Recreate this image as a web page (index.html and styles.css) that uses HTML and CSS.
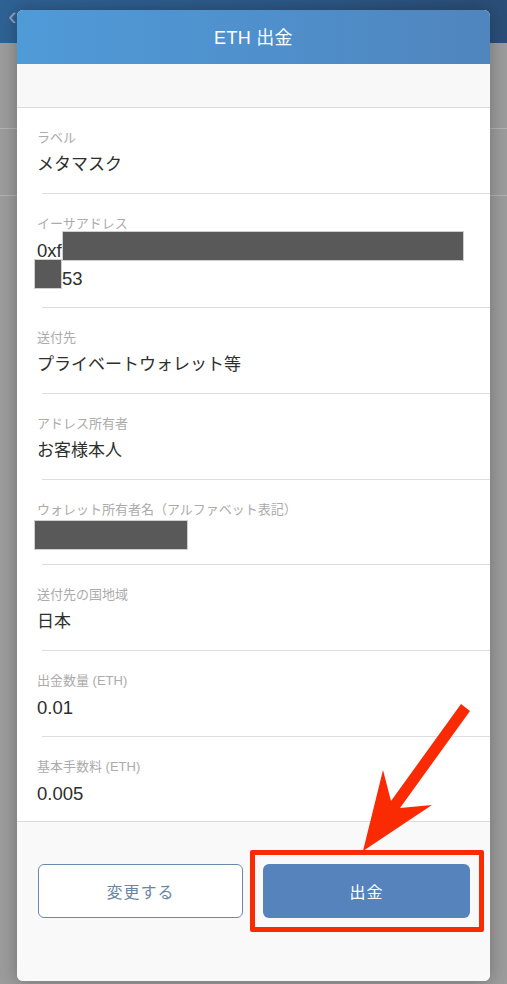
FILE: index.html
```html
<!DOCTYPE html>
<html lang="ja">
<head>
<meta charset="utf-8">
<title>ETH 出金</title>
<link rel="stylesheet" href="styles.css">
</head>
<body>
<div class="backdrop">
  <div class="topbar"><span class="back">‹</span></div>
  <div class="bgline l1"></div>
  <div class="bgline l2"></div>
</div>

<div class="modal">
  <div class="modal-header">ETH 出金</div>
  <div class="band"></div>
  <div class="rows">
    <div class="row">
      <div class="label">ラベル</div>
      <div class="value">メタマスク</div>
    </div>
    <div class="row">
      <div class="label">イーサアドレス</div>
      <div class="value num">0xf<span class="redact r1"></span><br><span class="redact r2"></span>53</div>
    </div>
    <div class="row">
      <div class="label">送付先</div>
      <div class="value">プライベートウォレット等</div>
    </div>
    <div class="row">
      <div class="label">アドレス所有者</div>
      <div class="value">お客様本人</div>
    </div>
    <div class="row">
      <div class="label">ウォレット所有者名（アルファベット表記）</div>
      <div class="value"><div class="redact r3"></div></div>
    </div>
    <div class="row">
      <div class="label">送付先の国地域</div>
      <div class="value">日本</div>
    </div>
    <div class="row">
      <div class="label">出金数量 (ETH)</div>
      <div class="value num">0.01</div>
    </div>
    <div class="row last">
      <div class="label">基本手数料 (ETH)</div>
      <div class="value num">0.005</div>
    </div>
  </div>
  <div class="footer">
    <button class="btn btn-outline">変更する</button>
    <button class="btn btn-primary">出金</button>
  </div>
</div>

<div class="highlight"></div>
<svg class="arrow" width="507" height="984" viewBox="0 0 507 984">
  <polygon points="461,704 391,801 383,770 363,851 432,805 400,808 470,711" fill="#fa2a02"/>
</svg>
</body>
</html>
```
FILE: styles.css
```css
* { box-sizing: border-box; }

html, body {
  margin: 0;
  padding: 0;
}

body {
  width: 507px;
  height: 984px;
  overflow: hidden;
  position: relative;
  background: #9c9c9c;
  font-family: "Liberation Sans", "Noto Sans CJK JP", sans-serif;
}

.backdrop {
  height: 984px;
}

.topbar {
  height: 43px;
  background: linear-gradient(90deg, #2f6294 0%, #2c5886 60%, #2b4e78 100%);
  padding: 6px 0 0 8px;
}

.back {
  color: rgba(255, 255, 255, 0.45);
  font-size: 26px;
  line-height: 20px;
}

.bgline {
  height: 1px;
  background: #b3b3b3;
}

.l1 { margin-top: 85px; }
.l2 { margin-top: 66px; }

.modal {
  position: absolute;
  left: 17px;
  top: 10px;
  width: 473px;
  height: 971px;
  border-radius: 6px;
  overflow: hidden;
  background: #fff;
  display: flex;
  flex-direction: column;
  box-shadow: 0 0 18px rgba(0, 0, 0, 0.28);
}

.modal-header {
  height: 54px;
  flex: none;
  background: linear-gradient(90deg, #4f9bd8 0%, #4f8fcb 55%, #5085bd 100%);
  color: #fff;
  font-size: 18px;
  line-height: 56px;
  text-align: center;
  letter-spacing: 0.3px;
}

.band {
  height: 44px;
  flex: none;
  background: #f8f8f8;
  border-bottom: 1px solid #dcdcdc;
}

.rows {
  flex: none;
}

.row {
  padding: 21px 0 0 20px;
}

.row::after {
  content: "";
  display: block;
  height: 1px;
  margin: 14px 0 0 5px;
  background: #dedede;
}

.row.last::after {
  display: none;
}

.row.last {
  padding-bottom: 13px;
}

.label {
  font-size: 13px;
  line-height: 18px;
  color: #ababab;
  margin-bottom: 4px;
}

.value {
  font-size: 17px;
  line-height: 28px;
  color: #2e2e2e;
}

.value.num {
  font-size: 18.5px;
}

.redact {
  background: #595959;
  border: 1px solid #cfcfcf;
}

.r1 {
  display: inline-block;
  width: 402px;
  height: 30px;
  vertical-align: top;
  margin: -6px 0 0 0;
}

.r2 {
  display: inline-block;
  width: 28px;
  height: 30px;
  vertical-align: top;
  margin: -6px 0 0 -3px;
}

.r3 {
  width: 154px;
  height: 30px;
  margin: -3px 0 1px -3px;
}

.footer {
  flex: 1;
  background: #f9f9f9;
  border-top: 1px solid #dcdcdc;
  display: flex;
  align-items: flex-start;
  gap: 20px;
  padding: 42px 20px 0 21px;
}

.btn {
  height: 54px;
  border-radius: 6px;
  font-family: "Noto Sans CJK JP", sans-serif;
  font-size: 16px;
  letter-spacing: 1px;
  padding: 0;
}

.btn-outline {
  width: 205px;
  background: #fff;
  border: 1px solid #6a8aac;
  color: #6786a6;
}

.btn-primary {
  width: 207px;
  background: #5683bc;
  border: none;
  color: #fff;
}

.highlight {
  position: absolute;
  left: 250px;
  top: 850px;
  width: 234px;
  height: 82px;
  border: 5px solid #fa2a02;
  border-radius: 2px;
}

.arrow {
  position: absolute;
  left: 0;
  top: 0;
  pointer-events: none;
}
```
